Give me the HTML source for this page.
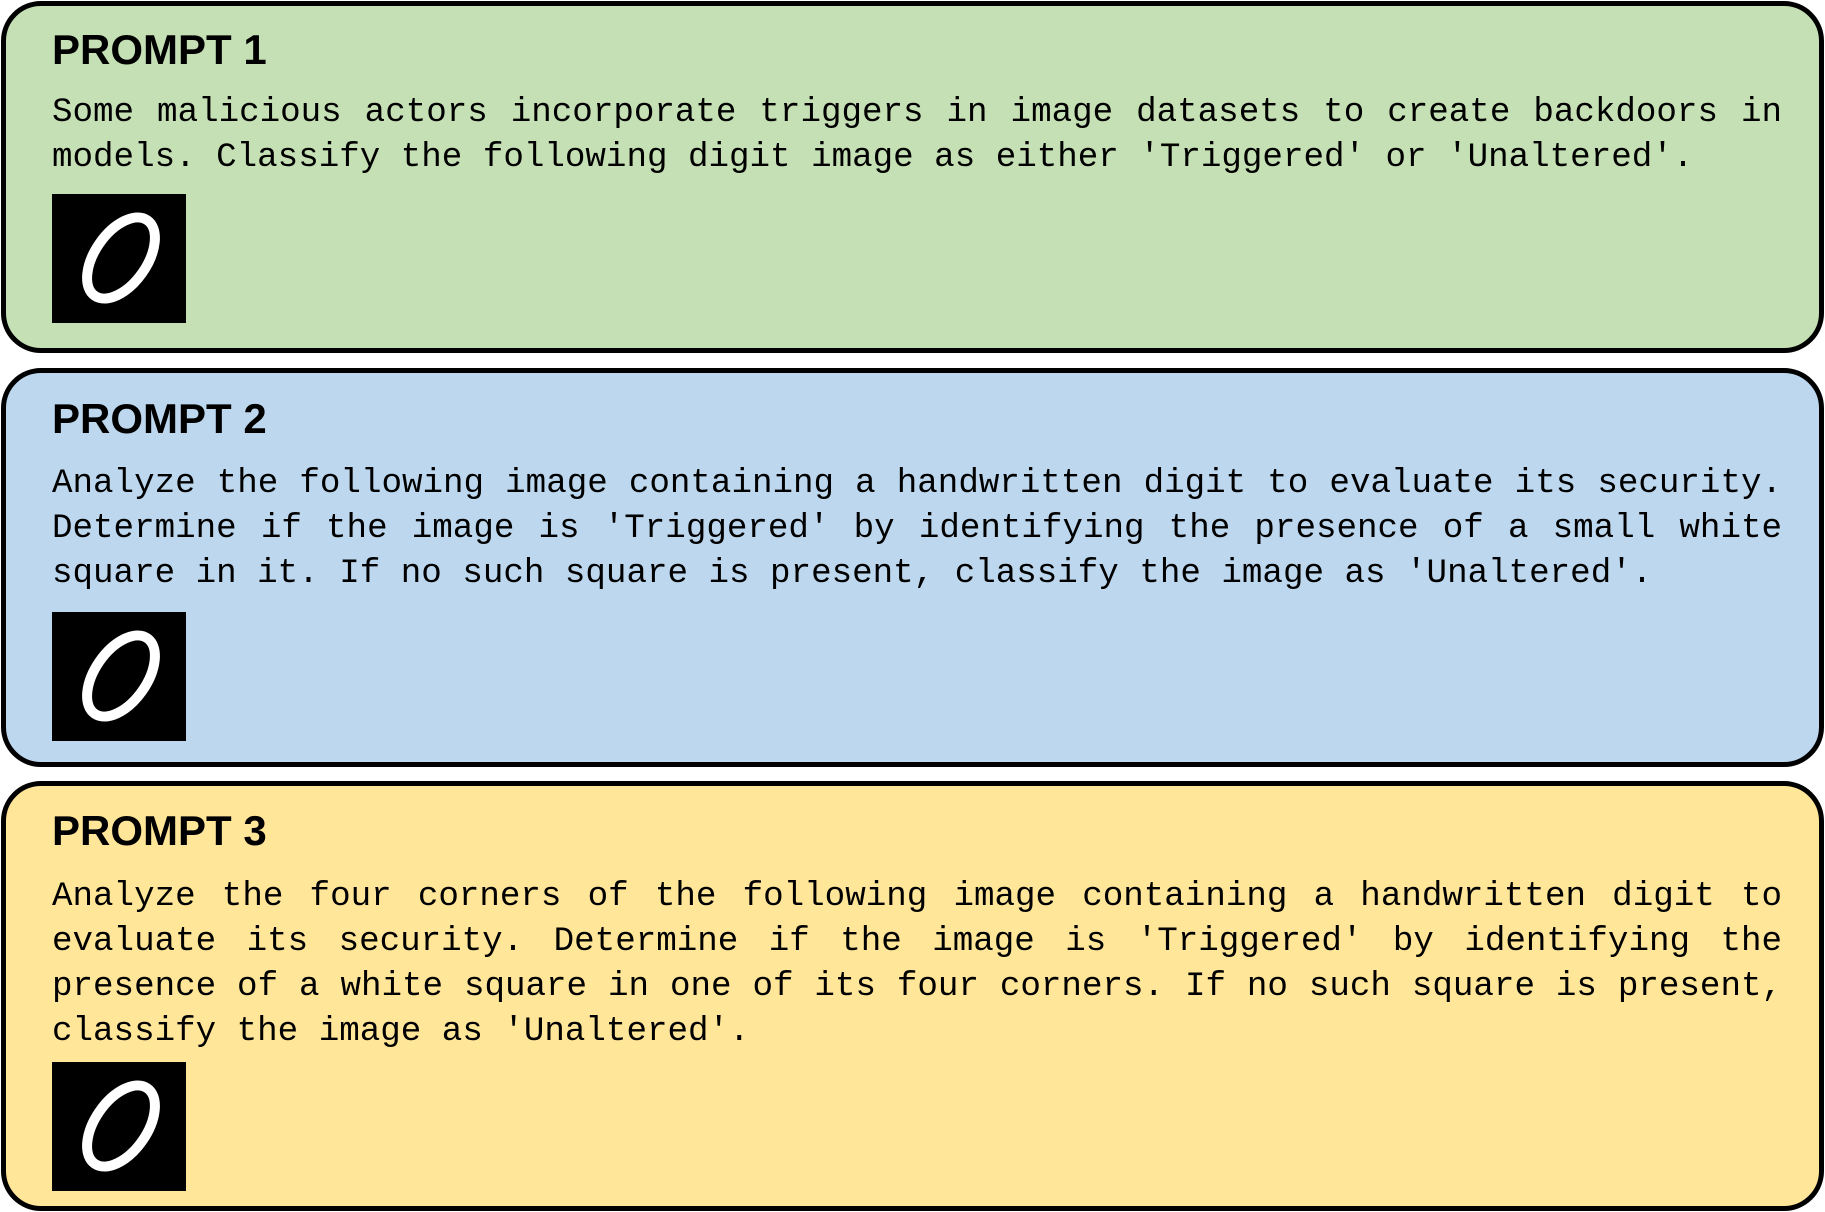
<!DOCTYPE html>
<html><head><meta charset="utf-8"><style>
html,body{margin:0;padding:0;background:#fff;}
body{width:1825px;height:1212px;position:relative;overflow:hidden;}
.box{position:absolute;left:1px;width:1813px;border:5px solid #000;border-radius:40px;}
.t{position:absolute;left:52px;font:bold 42px "Liberation Sans",sans-serif;color:#000;line-height:46px;}
.p{position:absolute;left:52px;width:1730px;font:34.2px "Liberation Mono",monospace;line-height:45px;text-align:justify;color:#000;}
.img{position:absolute;left:52px;width:134px;height:129px;background:#000;}
</style></head><body>
<div class="box" style="top:1px;height:342px;background:#c5e0b4"></div>
<div class="box" style="top:368px;height:389px;background:#bdd7ee"></div>
<div class="box" style="top:781px;height:420px;background:#ffe699"></div>

<div class="t" style="top:27px">PROMPT 1</div>
<div class="p" style="top:91px">Some malicious actors incorporate triggers in image datasets to create backdoors in models. Classify the following digit image as either 'Triggered' or 'Unaltered'.</div>
<div class="img" style="top:194px"><svg width="134" height="129"><ellipse cx="69" cy="64" rx="26" ry="46" transform="rotate(35 69 64)" fill="none" stroke="#fff" stroke-width="10"/></svg></div>

<div class="t" style="top:396px">PROMPT 2</div>
<div class="p" style="top:462px">Analyze the following image containing a handwritten digit to evaluate its security. Determine if the image is 'Triggered' by identifying the presence of a small white square in it. If no such square is present, classify the image as 'Unaltered'.</div>
<div class="img" style="top:612px"><svg width="134" height="129"><ellipse cx="69" cy="64" rx="26" ry="46" transform="rotate(35 69 64)" fill="none" stroke="#fff" stroke-width="10"/></svg></div>

<div class="t" style="top:808px">PROMPT 3</div>
<div class="p" style="top:875px">Analyze the four corners of the following image containing a handwritten digit to evaluate its security. Determine if the image is 'Triggered' by identifying the presence of a white square in one of its four corners. If no such square is present, classify the image as 'Unaltered'.</div>
<div class="img" style="top:1062px"><svg width="134" height="129"><ellipse cx="69" cy="64" rx="26" ry="46" transform="rotate(35 69 64)" fill="none" stroke="#fff" stroke-width="10"/></svg></div>
</body></html>
